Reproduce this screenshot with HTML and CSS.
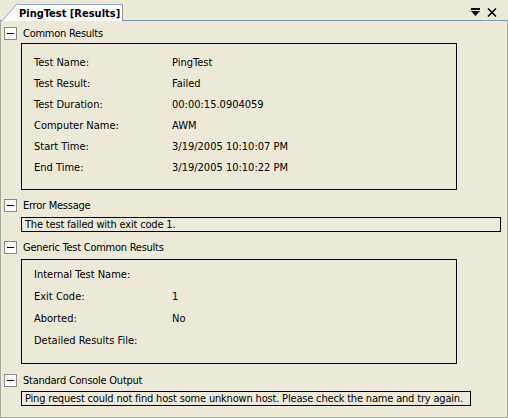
FILE: index.html
```html
<!DOCTYPE html>
<html>
<head>
<meta charset="utf-8">
<link rel="stylesheet" href="styles.css">
</head>
<body>
<div class="window">
  <div class="tabstrip">
    <div class="tab">
      <svg class="tab-slant" width="16" height="18" viewBox="0 0 16 18">
        <path d="M0 18 L15 1 H16 V18 Z" fill="#ffffff"/>
        <path d="M0.5 17.5 L15.5 0.5 H16" fill="none" stroke="#8ca5c4" stroke-width="1"/>
      </svg>
      <div class="tab-label">PingTest [Results]</div>
    </div>
    <div class="tab-tools">
      <svg width="9" height="9" viewBox="0 0 9 9">
        <rect x="0" y="0" width="9" height="2" fill="#000"/>
        <path d="M0 3 H9 L4.5 8 Z" fill="#000"/>
      </svg>
      <svg width="10" height="9" viewBox="0 0 10 9">
        <path d="M1 0.5 L9 8.5 M9 0.5 L1 8.5" stroke="#000" stroke-width="1.5" fill="none"/>
      </svg>
    </div>
  </div>
  <div class="content">
    <div class="section section-common">
      <div class="section-head"><span class="toggle"></span><span>Common Results</span></div>
      <div class="group group-common">
        <div class="row"><span class="label">Test Name:</span><span>PingTest</span></div>
        <div class="row"><span class="label">Test Result:</span><span>Failed</span></div>
        <div class="row"><span class="label">Test Duration:</span><span>00:00:15.0904059</span></div>
        <div class="row"><span class="label">Computer Name:</span><span>AWM</span></div>
        <div class="row"><span class="label">Start Time:</span><span>3/19/2005 10:10:07 PM</span></div>
        <div class="row"><span class="label">End Time:</span><span>3/19/2005 10:10:22 PM</span></div>
      </div>
    </div>
    <div class="section">
      <div class="section-head"><span class="toggle"></span><span>Error Message</span></div>
      <div class="textbox textbox-error">The test failed with exit code 1.</div>
    </div>
    <div class="section section-generic">
      <div class="section-head"><span class="toggle"></span><span>Generic Test Common Results</span></div>
      <div class="group group-generic">
        <div class="row row-tall"><span class="label">Internal Test Name:</span><span></span></div>
        <div class="row row-tall"><span class="label">Exit Code:</span><span>1</span></div>
        <div class="row row-tall"><span class="label">Aborted:</span><span>No</span></div>
        <div class="row row-tall"><span class="label">Detailed Results File:</span><span></span></div>
      </div>
    </div>
    <div class="section section-console">
      <div class="section-head"><span class="toggle"></span><span>Standard Console Output</span></div>
      <div class="textbox textbox-console">Ping request could not find host some unknown host. Please check the name and try again.</div>
    </div>
  </div>
</div>
</body>
</html>
```
FILE: styles.css
```css
html, body {
  margin: 0;
  padding: 0;
  background: #ece9d8;
}
body {
  font-family: "DejaVu Sans Condensed", "Liberation Sans", sans-serif;
  font-size: 11px;
  color: #000;
}
.window {
  width: 508px;
  height: 418px;
  display: flex;
  flex-direction: column;
  background: #ece9d8;
}
.tabstrip {
  height: 20px;
  flex: none;
  display: flex;
  align-items: flex-end;
  border-bottom: 1px solid #7f9db9;
  padding-left: 2px;
}
.tab {
  display: flex;
  align-items: flex-end;
  height: 18px;
  margin-bottom: -1px;
}
.tab-slant {
  display: block;
}
.tab-label {
  height: 17px;
  box-sizing: border-box;
  background: #fff;
  border-top: 1px solid #8ca5c4;
  border-right: 1px solid #919b9c;
  padding: 1px 2px 0 1px;
  font-weight: bold;
  line-height: 15px;
}
.tab-tools {
  margin-left: auto;
  display: flex;
  align-items: center;
  gap: 7px;
  height: 20px;
  padding-right: 11px;
  padding-top: 5px;
  box-sizing: border-box;
}
.tab-tools svg {
  display: block;
}
.content {
  flex: 1;
  border-left: 1px solid #aca899;
  border-right: 1px solid #aca899;
  border-bottom: 1px solid #aca899;
  padding: 6px 0 0 3px;
}
.section {
  margin-bottom: 9px;
}
.section-generic {
  margin-bottom: 10px;
}
.section-head {
  display: flex;
  align-items: center;
  height: 13px;
  gap: 6px;
  margin-bottom: 5px;
  line-height: 13px;
  letter-spacing: -0.25px;
}
.section-common .section-head {
  margin-bottom: 3px;
}
.section-console .section-head {
  margin-bottom: 4px;
}
.toggle {
  width: 11px;
  height: 11px;
  border: 1px solid #8c8c8c;
  background: #fff;
  position: relative;
  flex: none;
}
.toggle::after {
  content: "";
  position: absolute;
  left: 2px;
  top: 5px;
  width: 7px;
  height: 1px;
  background: #000;
}
.group {
  margin-left: 17px;
  border: 1px solid #000;
  box-sizing: border-box;
  width: 436px;
  padding-left: 12px;
}
.group-common {
  padding-top: 8px;
  padding-bottom: 11px;
}
.group-generic {
  padding-top: 4px;
  padding-bottom: 11px;
}
.row {
  display: flex;
  height: 21px;
  line-height: 21px;
}
.row-tall {
  height: 22px;
  line-height: 22px;
}
.label {
  width: 138px;
  flex: none;
}
.textbox {
  margin-left: 17px;
  border: 1px solid #000;
  box-sizing: border-box;
  height: 15px;
  line-height: 13px;
  padding-left: 3px;
  white-space: nowrap;
  letter-spacing: -0.18px;
}
.textbox-error {
  width: 480px;
}
.textbox-console {
  width: 450px;
}
```
